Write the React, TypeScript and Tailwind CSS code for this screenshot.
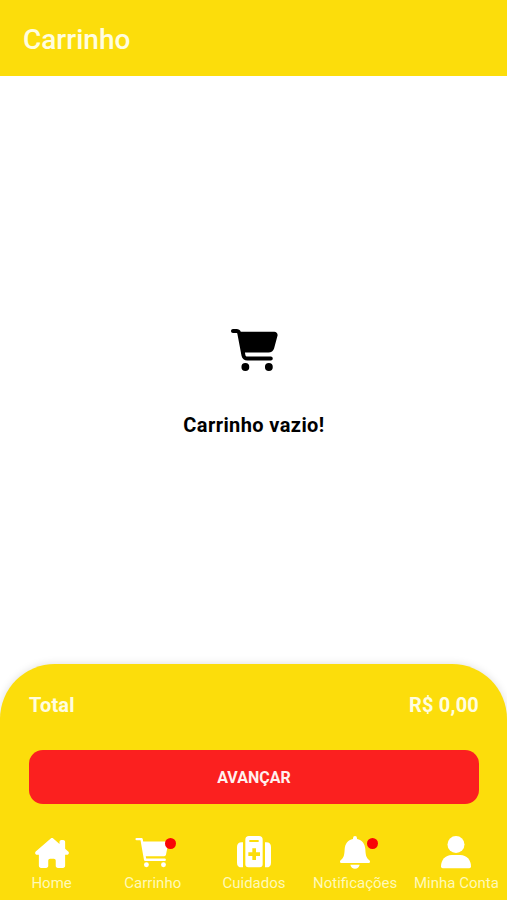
import { ReactNode } from "react";
import { FaCartShopping, FaHouseChimney } from "react-icons/fa6";
import { IoCart } from "react-icons/io5";

type Tab = {
  label: string;
  icon: ReactNode;
  badge?: boolean;
};

export default function App() {
  return (
    <div className="flex h-[900px] w-[507px] flex-col overflow-hidden bg-white font-['Roboto',sans-serif]">
      <header className="flex h-[76px] shrink-0 items-center bg-[#fcdd0b] px-[23px] pt-[3px]">
        <h1 className="text-[28px] leading-8 font-medium text-[#fffde0]">
          Carrinho
        </h1>
      </header>

      <main className="flex flex-1 flex-col items-center pt-[253px] pl-[1px]">
        <FaCartShopping className="h-[42px] w-[47px] text-black" />
        <p className="mt-[42px] text-[20px] leading-6 font-bold tracking-[0.4px] text-black">
          Carrinho vazio!
        </p>
      </main>

      <footer className="flex h-[236px] shrink-0 flex-col rounded-t-[55px] bg-[#fcdd0b] shadow-[0_0_9px_rgba(0,0,0,0.13)]">
        <div className="flex items-center justify-between pt-[29px] pr-[28px] pl-[29px] text-[20px] leading-6 font-bold tracking-[0.2px] text-[#fffde0]">
          <span>Total</span>
          <span>R$ 0,00</span>
        </div>
        <button className="mr-[28px] ml-[29px] mt-[33px] h-[54px] shrink-0 rounded-[14px] bg-[#fb201f] pt-[2px] text-[16px] font-bold text-[#fff0ee]">
          AVANÇAR
        </button>
        <nav className="mt-[32px] grid grid-cols-5 pl-[1px]">
          {TABS.map((tab) => (
            <TabItem key={tab.label} {...tab} />
          ))}
        </nav>
      </footer>
    </div>
  );
}

const TabItem = ({ label, icon, badge }: Tab) => (
  <button className="flex flex-col items-center">
    <span className="relative flex h-[33px] w-[34px] items-center justify-center text-white">
      {icon}
      {badge && (
        <span className="absolute top-[2px] right-[-6px] size-[11px] rounded-full bg-[#f90606]" />
      )}
    </span>
    <span className="mt-[5px] text-[15px] leading-[18px] whitespace-nowrap text-[#fff9b8]">
      {label}
    </span>
  </button>
);

const MedkitIcon = () => (
  <svg viewBox="0 0 102 96" className="mb-[1px] h-8 w-[34px] shrink-0" fill="currentColor">
    <path d="M14 19h4v75h-4Q0 94 0 80V33Q0 19 14 19ZM84 19h4q14 0 14 14v47q0 14-14 14h-4Z" />
    <path
      fillRule="evenodd"
      d="M36 0h30q11 0 11 11v74q0 9-9 9H34q-9 0-9-9V11Q25 0 36 0ZM37 12v6h28v-6ZM46 37v12H34v11h12v12h11V60h12V49H57V37Z"
    />
  </svg>
);

const BellIcon = () => (
  <svg viewBox="0 0 90 99" className="h-[33px] w-[30px] shrink-0" fill="currentColor">
    <path d="M45 0q6 0 6 7v2c16 3 24 15 25 31 1 17 2 25 12 33 4 4 2 8-3 8H5c-5 0-7-4-3-8 10-8 11-16 12-33 1-16 9-28 25-31V7q0-7 6-7ZM31 86h28q-3 12-14 12T31 86Z" />
  </svg>
);

const UserIcon = () => (
  <svg viewBox="0 0 90 99" className="h-[33px] w-[30px] shrink-0" fill="currentColor">
    <circle cx="45" cy="25.5" r="25.5" />
    <path d="M32 57h26c19 0 32 15 32 34q0 6-5 6H5q-5 0-5-6c0-19 13-34 32-34Z" />
  </svg>
);

const TABS: Tab[] = [
  {
    label: "Home",
    icon: <FaHouseChimney className="mt-[1px] h-[30px] w-[34px] shrink-0" />,
  },
  {
    label: "Carrinho",
    icon: <IoCart className="size-[39px] shrink-0" />,
    badge: true,
  },
  { label: "Cuidados", icon: <MedkitIcon /> },
  { label: "Notificações", icon: <BellIcon />, badge: true },
  { label: "Minha Conta", icon: <UserIcon /> },
];
